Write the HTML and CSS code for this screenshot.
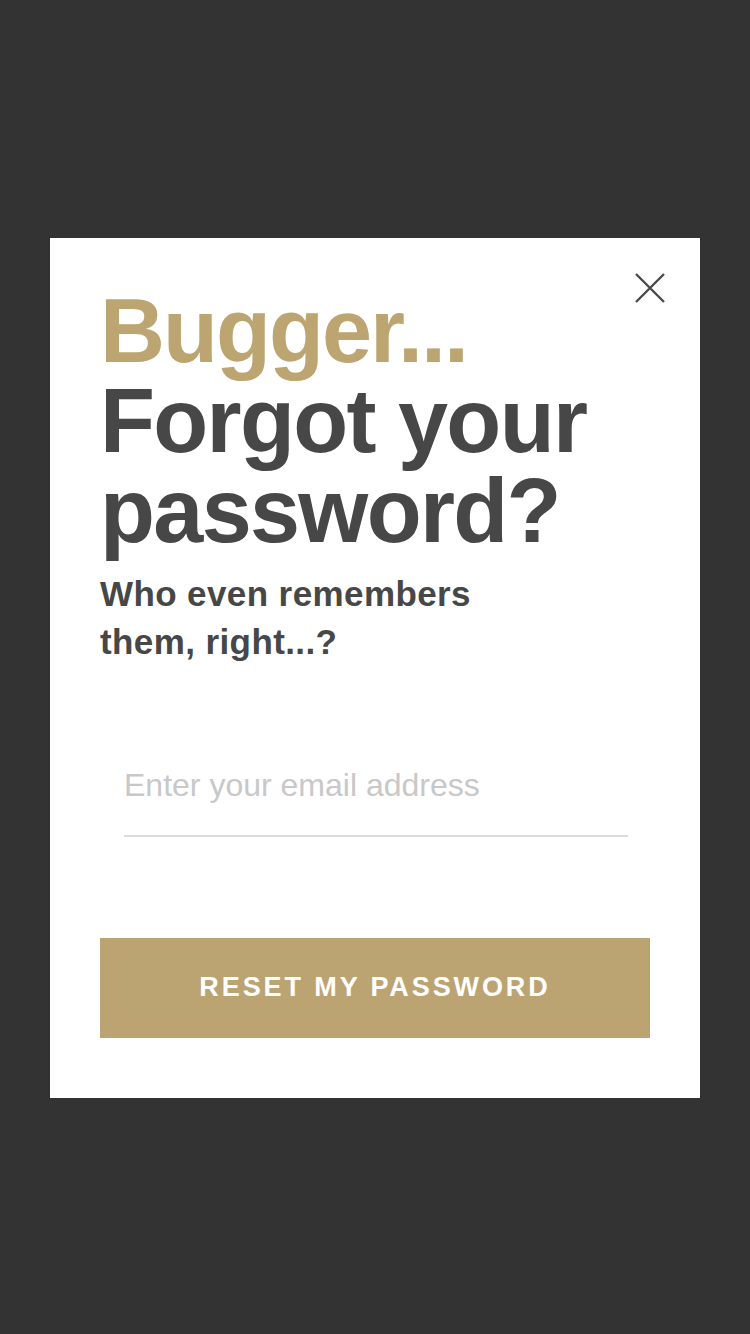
FILE: index.html
```html
<!DOCTYPE html>
<html lang="en">
<head>
<meta charset="utf-8">
<title>Forgot your password?</title>
<link rel="stylesheet" href="styles.css">
</head>
<body>
<div class="overlay">
  <div class="modal">
    <button class="close" aria-label="Close">
      <svg width="32" height="32" viewBox="0 0 32 32"><path d="M2 2 L30 30 M30 2 L2 30" stroke="#4a4a4a" stroke-width="2.4" fill="none"/></svg>
    </button>
    <h1 class="title"><span class="gold">Bugger...</span><br>Forgot your password?</h1>
    <p class="subtitle">Who even remembers<br>them, right...?</p>
    <input class="email" type="email" placeholder="Enter your email address">
    <button class="reset">RESET MY PASSWORD</button>
  </div>
</div>
</body>
</html>
```
FILE: styles.css
```css
html, body {
  margin: 0;
  padding: 0;
}
body {
  background: #333333;
  font-family: "Liberation Sans", Arial, sans-serif;
}
.overlay {
  min-height: 100vh;
  display: flex;
  align-items: center;
  justify-content: center;
  padding-top: 1px;
  box-sizing: border-box;
}
.modal {
  position: relative;
  width: 650px;
  box-sizing: border-box;
  background: #ffffff;
  padding: 48px 50px 60px 50px;
  display: flex;
  flex-direction: column;
}
.close {
  position: absolute;
  top: 34px;
  right: 34px;
  width: 32px;
  height: 32px;
  padding: 0;
  border: none;
  background: none;
  display: block;
}
.close svg { display: block; }
.title {
  margin: 0;
  font-size: 90px;
  line-height: 90px;
  font-weight: 700;
  letter-spacing: -1.7px;
  color: #474747;
  width: 500px;
}
.gold { color: #bda571; letter-spacing: -2px; }
.subtitle {
  margin: 14px 0 0 0;
  font-size: 35px;
  line-height: 48px;
  font-weight: 700;
  color: #474747;
  letter-spacing: 0.4px;
}
.email {
  display: block;
  margin: 100px 24px 0 24px;
  width: 504px;
  box-sizing: border-box;
  height: 71px;
  padding: 0 0 29px 0;
  border: none;
  border-bottom: 2px solid #dcdcdc;
  font-family: "Liberation Sans", Arial, sans-serif;
  font-size: 32px;
  line-height: 40px;
  color: #474747;
  outline: none;
  background: transparent;
}
.email::placeholder { color: #c8c8c8; }
.reset {
  margin-top: 101px;
  height: 100px;
  width: 100%;
  border: none;
  background: #bca472;
  color: #ffffff;
  font-family: "Liberation Sans", Arial, sans-serif;
  font-weight: 700;
  font-size: 27px;
  letter-spacing: 2.9px;
  padding: 0;
}
```
